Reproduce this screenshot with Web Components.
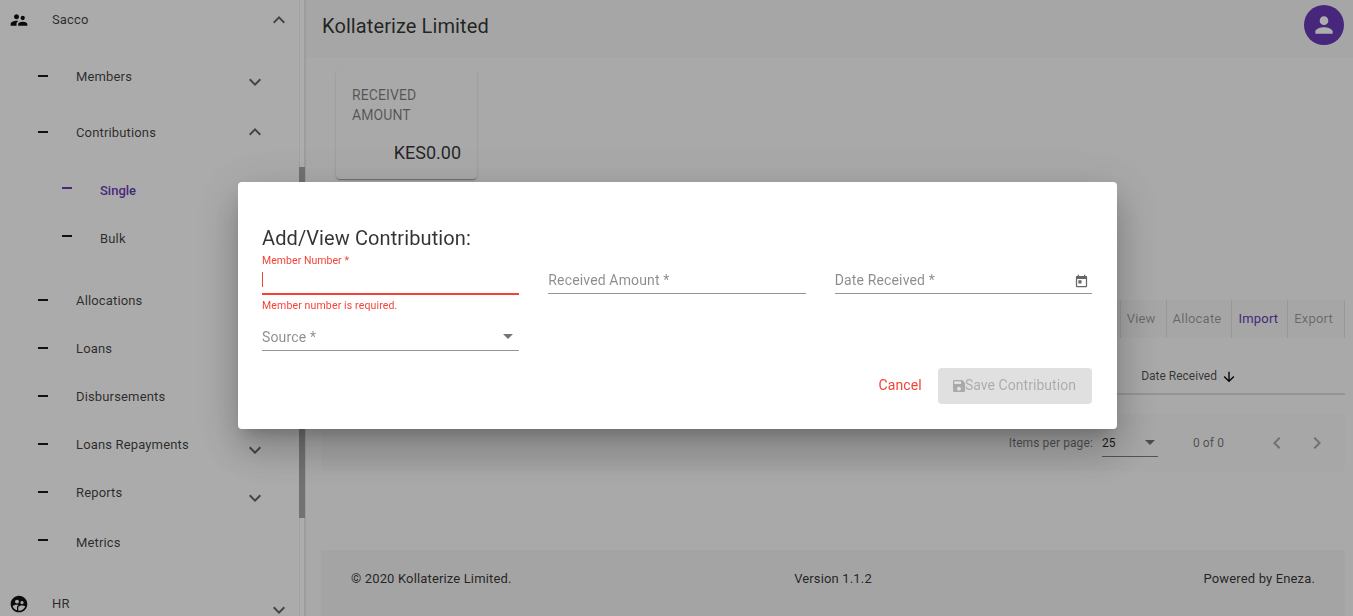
<!DOCTYPE html>
<html>
<head>
<meta charset="utf-8">
<title>Kollaterize Limited</title>
<style>
  html, body { margin: 0; height: 100%; overflow: hidden; }
  body { font-family: Roboto, "Liberation Sans", sans-serif; background: #fafafa; color: rgba(0, 0, 0, 0.87); }
</style>
</head>
<body>
<app-shell>
  <side-nav slot="nav">
    <nav-item level="0" icon="supervisor" open>Sacco</nav-item>
    <nav-item level="1" gap="8" chevron="down" drop>Members</nav-item>
    <nav-item level="1" gap="8" chevron="up">Contributions</nav-item>
    <nav-item level="2" gap="10" active raise>Single</nav-item>
    <nav-item level="2" raise>Bulk</nav-item>
    <nav-item level="1" gap="14">Allocations</nav-item>
    <nav-item level="1">Loans</nav-item>
    <nav-item level="1">Disbursements</nav-item>
    <nav-item level="1" chevron="down" drop>Loans Repayments</nav-item>
    <nav-item level="1" chevron="down" drop>Reports</nav-item>
    <nav-item level="1" gap="2" raise>Metrics</nav-item>
    <nav-item level="0" gap="14" icon="usercircle" chevron="down" drop>HR</nav-item>
  </side-nav>
  <top-bar slot="top">Kollaterize Limited</top-bar>
  <stat-card slot="main" value="KES0.00">RECEIVED AMOUNT</stat-card>
  <data-table slot="main"></data-table>
  <app-footer slot="bottom"></app-footer>
</app-shell>
<contribution-dialog></contribution-dialog>

<script>
// material icon paths
const ICONS = {
  supervisor: "M16.5 12c1.38 0 2.49-1.12 2.49-2.5S17.88 7 16.5 7C15.12 7 14 8.12 14 9.5s1.12 2.5 2.5 2.5zM9 11c1.66 0 2.99-1.34 2.99-3S10.66 5 9 5C7.34 5 6 6.34 6 8s1.34 3 3 3zm7.5 3c-1.83 0-5.5.92-5.5 2.75V19h11v-2.25c0-1.83-3.67-2.75-5.5-2.75zM9 13c-2.33 0-7 1.17-7 3.5V19h7v-2.25c0-.85.33-2.34 2.37-3.47C10.5 13.1 9.66 13 9 13z",
  usercircle: "M11.99 2c-5.52 0-10 4.48-10 10s4.48 10 10 10 10-4.48 10-10-4.48-10-10-10zm3.61 6.34c1.07 0 1.93.86 1.93 1.93 0 1.07-.86 1.93-1.93 1.93-1.07 0-1.93-.86-1.93-1.93-.01-1.07.86-1.93 1.93-1.93zm-6-1.58c1.3 0 2.36 1.06 2.36 2.36 0 1.3-1.06 2.36-2.36 2.36s-2.36-1.06-2.36-2.36c0-1.31 1.05-2.36 2.36-2.36zm0 9.13v3.75c-2.4-.75-4.3-2.6-5.14-4.96 1.05-1.12 3.67-1.69 5.14-1.69.53 0 1.2.08 1.9.22-1.64.87-1.9 2.02-1.9 2.68zM11.99 20c-.27 0-.53-.01-.79-.04v-4.07c0-1.42 2.94-2.13 4.4-2.13 1.07 0 2.92.39 3.84 1.15-1.17 2.97-4.06 5.09-7.45 5.09z",
  down: "M7.41 8.59L12 13.17l4.59-4.58L18 10l-6 6-6-6 1.41-1.41z",
  up: "M12 8l-6 6 1.41 1.41L12 10.83l4.59 4.58L18 14z",
  left: "M15.41 7.41L14 6l-6 6 6 6 1.41-1.41L10.83 12z",
  right: "M10 6L8.59 7.41 13.17 12l-4.58 4.59L10 18l6-6z",
  person: "M12 12c2.21 0 4-1.79 4-4s-1.79-4-4-4-4 1.79-4 4 1.79 4 4 4zm0 2c-2.67 0-8 1.34-8 4v2h16v-2c0-2.66-5.33-4-8-4z",
  arrowdown: "M20 12l-1.41-1.41L13 16.17V4h-2v12.17l-5.58-5.59L4 12l8 8 8-8z",
  today: "M19 3h-1V1h-2v2H8V1H6v2H5c-1.11 0-1.99.9-1.99 2L3 19c0 1.1.89 2 2 2h14c1.1 0 2-.9 2-2V5c0-1.1-.9-2-2-2zm0 16H5V8h14v11zM7 10h5v5H7z",
  save: "M17 3H5c-1.11 0-2 .9-2 2v14c0 1.1.89 2 2 2h14c1.1 0 2-.9 2-2V7l-4-4zm-5 16c-1.66 0-3-1.34-3-3s1.34-3 3-3 3 1.34 3 3-1.34 3-3 3zm3-10H5V5h10v4z"
};

class MatIcon extends HTMLElement {
  connectedCallback() {
    const size = this.getAttribute("size") || 24;
    const d = ICONS[this.getAttribute("name")];
    this.attachShadow({ mode: "open" });
    this.shadowRoot.innerHTML = `
      <style>
        :host { display: inline-flex; flex: none; width: ${size}px; height: ${size}px; }
        svg { display: block; width: 100%; height: 100%; fill: currentColor; }
      </style>
      <svg viewBox="0 0 24 24"><path d="${d}"></path></svg>`;
  }
}
customElements.define("mat-icon", MatIcon);

class AppShell extends HTMLElement {
  connectedCallback() {
    this.attachShadow({ mode: "open" });
    this.shadowRoot.innerHTML = `
      <style>
        :host { display: flex; height: 616px; overflow: hidden; }
        .side { flex: none; width: 306px; }
        .body { flex: 1; min-width: 0; display: flex; flex-direction: column; }
        .content { flex: 1; min-height: 0; }
      </style>
      <div class="side"><slot name="nav"></slot></div>
      <div class="body">
        <slot name="top"></slot>
        <div class="content"><slot name="main"></slot></div>
        <slot name="bottom"></slot>
      </div>`;
  }
}
customElements.define("app-shell", AppShell);

class SideNav extends HTMLElement {
  connectedCallback() {
    this.attachShadow({ mode: "open" });
    this.shadowRoot.innerHTML = `
      <style>
        :host { display: flex; height: 616px; overflow: hidden; background: #fdfdfd; position: relative; }
        .list { width: 299px; flex: none; margin-top: -4px; }
        .track { flex: 1; border-left: 1px solid #efefef; border-right: 2px solid #e8e8e8; background: #fff; }
        .thumb { position: absolute; left: 299px; top: 167px; width: 6px; height: 351px; background: #a8a8a8; }
      </style>
      <div class="list"><slot></slot></div>
      <div class="track"></div>
      <div class="thumb"></div>`;
  }
}
customElements.define("side-nav", SideNav);

class NavItem extends HTMLElement {
  connectedCallback() {
    const level = +this.getAttribute("level");
    const icon = this.getAttribute("icon");
    const chevron = this.getAttribute("chevron") || (this.hasAttribute("open") ? "up" : "");
    const pad = [9, 38, 62][level];
    const right = level === 0 ? 8 : 32;
    const gap = this.getAttribute("gap") || 0;
    const active = this.hasAttribute("active");
    this.attachShadow({ mode: "open" });
    this.shadowRoot.innerHTML = `
      <style>
        :host { display: block; margin-top: ${gap}px; }
        .row { display: flex; align-items: center; height: 48px; padding: 0 ${right}px 0 ${pad}px; box-sizing: border-box;
          font-size: 13px; letter-spacing: ${active ? 0 : 0.15}px; color: ${active ? "#673ab7" : "rgba(0,0,0,.76)"}; font-weight: ${active ? 500 : 400}; }
        .lead { flex: none; width: ${level === 0 ? 43 : 38}px; display: flex; align-items: center; }
        .dash { width: 10px; height: 2px; background: ${active ? "#673ab7" : "#1a1a1a"}; margin-top: ${this.hasAttribute("raise") ? -4 : 0}px; }
        .label { margin-top: ${level === 0 ? -2 : 0}px; }
        .chev { margin-left: auto; color: rgba(0,0,0,.6); margin-top: ${this.hasAttribute("drop") ? 12 : 0}px; }
        .lead mat-icon { color: #111; }
      </style>
      <div class="row">
        <span class="lead">${icon ? `<mat-icon name="${icon}" size="20"></mat-icon>` : `<span class="dash"></span>`}</span>
        <span class="label"><slot></slot></span>
        ${chevron ? `<mat-icon class="chev" name="${chevron}"></mat-icon>` : ""}
      </div>`;
  }
}
customElements.define("nav-item", NavItem);

class TopBar extends HTMLElement {
  connectedCallback() {
    this.attachShadow({ mode: "open" });
    this.shadowRoot.innerHTML = `
      <style>
        :host { display: flex; flex: none; align-items: center; justify-content: space-between; height: 57px;
          padding: 0 9px 0 16px; box-sizing: border-box; background: #f5f5f5; font-size: 20px; letter-spacing: 0.1px; color: rgba(0,0,0,.8); }
        .avatar { width: 40px; height: 40px; border-radius: 50%; background: #673ab7; color: #fff; display: flex;
          align-items: center; justify-content: center; margin-top: -7px; }
        span { margin-top: -6px; }
      </style>
      <span><slot></slot></span>
      <div class="avatar"><mat-icon name="person" size="26"></mat-icon></div>`;
  }
}
customElements.define("top-bar", TopBar);

class StatCard extends HTMLElement {
  connectedCallback() {
    this.attachShadow({ mode: "open" });
    this.shadowRoot.innerHTML = `
      <style>
        :host { display: block; box-sizing: border-box; width: 141px; height: 109px; margin: 13px 0 0 30px; padding: 15px 16px;
          background: #fafafa; border-radius: 4px; box-shadow: 0 2px 1px -1px rgba(0,0,0,.2), 0 1px 1px rgba(0,0,0,.14), 0 1px 3px rgba(0,0,0,.12); }
        .label { font-size: 14px; line-height: 20px; letter-spacing: 0.1px; color: rgba(0,0,0,.5); height: 48px; }
        .value { font-size: 18px; line-height: 24px; text-align: right; margin-top: 8px; color: rgba(0,0,0,.8); }
      </style>
      <div class="label"><slot></slot></div>
      <div class="value">${this.getAttribute("value")}</div>`;
  }
}
customElements.define("stat-card", StatCard);

class DataTable extends HTMLElement {
  connectedCallback() {
    this.attachShadow({ mode: "open" });
    this.shadowRoot.innerHTML = `
      <style>
        :host { display: block; margin: 121px 8px 0 15px; font-size: 13px; }
        .toolbar { display: flex; justify-content: flex-end; height: 38px; background: #f5f5f5; }
        .toolbar button { font: inherit; border: 0; border-left: 1px solid #e0e0e0; background: none; height: 38px; padding: 0 10px 2px 6px; letter-spacing: 0.2px; color: rgba(0,0,0,.38); }
        .toolbar button:last-child { border-right: 1px solid #e0e0e0; padding-right: 11px; }
        .toolbar button.on { color: #673ab7; padding-right: 9px; }
        .head { display: flex; align-items: center; justify-content: flex-end; height: 57px; box-sizing: border-box; border-bottom: 2px solid #dcdcdc;
          font-size: 12px; color: rgba(0,0,0,.7); padding: 20px 108px 0 0; gap: 4px; }
        .head mat-icon { margin-top: 2px; color: #000; }
        .pager { display: flex; align-items: center; justify-content: flex-end; height: 57px; margin-top: 19px; background: #f6f6f6;
          font-size: 12px; letter-spacing: 0.1px; color: rgba(0,0,0,.54); }
        .select { width: 56px; height: 27px; margin: 0 35px 0 9px; border-bottom: 1px solid rgba(0,0,0,.5); display: flex; align-items: center; justify-content: space-between;
          box-sizing: border-box; padding-right: 3px; color: rgba(0,0,0,.87); margin-top: 1px; }
        .arrow { width: 0; height: 0; border: 5.5px solid transparent; border-top-color: rgba(0,0,0,.54); border-bottom: 0; }
        .range { margin-right: 41px; }
        .pager mat-icon { color: rgba(0,0,0,.32); }
        .pager mat-icon + mat-icon { margin: 0 16px; }
      </style>
      <div class="toolbar">
        <button>View</button><button>Allocate</button><button class="on">Import</button><button>Export</button>
      </div>
      <div class="head">Date Received <mat-icon name="arrowdown" size="16"></mat-icon></div>
      <div class="pager">
        <span>Items per page:</span>
        <div class="select"><span>25</span><span class="arrow"></span></div>
        <span class="range">0 of 0</span>
        <mat-icon name="left"></mat-icon><mat-icon name="right"></mat-icon>
      </div>`;
  }
}
customElements.define("data-table", DataTable);

class AppFooter extends HTMLElement {
  connectedCallback() {
    this.attachShadow({ mode: "open" });
    this.shadowRoot.innerHTML = `
      <style>
        :host { display: grid; flex: none; grid-template-columns: repeat(3, 1fr); align-items: center; height: 66px; box-sizing: border-box;
          margin: 0 8px 0 15px; padding: 0 30px 10px; background: #f2f2f2; font-size: 13px; letter-spacing: 0.15px; color: rgba(0,0,0,.8); }
        .mid { text-align: center; }
        .end { text-align: right; }
      </style>
      <span>© 2020 Kollaterize Limited.</span>
      <span class="mid">Version 1.1.2</span>
      <span class="end">Powered by Eneza.</span>`;
  }
}
customElements.define("app-footer", AppFooter);

class FormField extends HTMLElement {
  connectedCallback() {
    const error = this.getAttribute("error");
    const label = this.getAttribute("label");
    this.attachShadow({ mode: "open" });
    this.shadowRoot.innerHTML = `
      <style>
        :host { display: block; min-width: 0; }
        .float { height: 14px; font-size: 10.5px; line-height: 17px; letter-spacing: 0.05px; color: #f44336; }
        .input { height: 27px; display: flex; align-items: center; justify-content: space-between; font-size: 14px; letter-spacing: 0.15px; color: rgba(0,0,0,.45); }
        .caret { width: 1px; height: 15px; background: #f44336; }
        .line { height: 1px; background: rgba(0,0,0,.42); }
        .line.err { height: 2px; background: #f44336; margin-bottom: -1px; }
        .hint { height: 15px; box-sizing: border-box; padding-top: 6px; font-size: 10.5px; line-height: 12px; letter-spacing: 0.15px; color: #f44336; }
        .arrow { width: 0; height: 0; border: 5px solid transparent; border-top-color: rgba(0,0,0,.54); border-bottom: 0; margin-right: 6px; }
        mat-icon { margin-right: 3px; margin-top: 3px; color: rgba(0,0,0,.6); }
      </style>
      <div class="float">${error ? label : ""}</div>
      <div class="input">
        ${error ? `<span class="caret"></span>` : `<span>${label}</span>`}
        <slot></slot>
      </div>
      <div class="line ${error ? "err" : ""}"></div>
      <div class="hint">${error || ""}</div>`;
    if (this.hasAttribute("select")) {
      this.shadowRoot.querySelector(".input").insertAdjacentHTML("beforeend", `<span class="arrow"></span>`);
    }
    if (this.hasAttribute("date")) {
      this.shadowRoot.querySelector(".input").insertAdjacentHTML("beforeend", `<mat-icon name="today" size="15"></mat-icon>`);
    }
  }
}
customElements.define("form-field", FormField);

class ContributionDialog extends HTMLElement {
  connectedCallback() {
    this.attachShadow({ mode: "open" });
    this.shadowRoot.innerHTML = `
      <style>
        :host { position: fixed; inset: 0; display: flex; align-items: center; justify-content: center; padding: 0 0 5px 2px;
          box-sizing: border-box; background: rgba(0,0,0,.32); }
        .dialog { width: 879px; box-sizing: border-box; padding: 42px 25px 25px 24px; background: #fff; border-radius: 4px;
          box-shadow: 0 11px 15px -7px rgba(0,0,0,.2), 0 24px 38px 3px rgba(0,0,0,.14), 0 9px 46px 8px rgba(0,0,0,.12); }
        h2 { margin: 0; font-size: 20px; line-height: 28px; font-weight: 400; letter-spacing: 0.1px; color: rgba(0,0,0,.8); }
        .grid { display: grid; grid-template-columns: repeat(3, 1fr); column-gap: 29px; }
        .actions { display: flex; justify-content: flex-end; align-items: center; margin-top: 2px; font-size: 14px; letter-spacing: 0.05px; }
        .cancel { color: #f44336; margin-right: 16px; margin-top: -2px; letter-spacing: 0.15px; }
        .save { display: flex; align-items: center; height: 34px; padding: 0 16px 2px 13px; border-radius: 4px; background: #e0e0e0; color: rgba(0,0,0,.24); }
        .save mat-icon { margin-right: -2px; margin-top: 2px; }
      </style>
      <div class="dialog">
        <h2>Add/View Contribution:</h2>
        <div class="grid">
          <form-field label="Member Number *" error="Member number is required."></form-field>
          <form-field label="Received Amount *"></form-field>
          <form-field label="Date Received *" date></form-field>
          <form-field label="Source *" select></form-field>
        </div>
        <div class="actions">
          <span class="cancel">Cancel</span>
          <div class="save"><mat-icon name="save" size="16"></mat-icon>Save Contribution</div>
        </div>
      </div>`;
  }
}
customElements.define("contribution-dialog", ContributionDialog);
</script>
</body>
</html>
